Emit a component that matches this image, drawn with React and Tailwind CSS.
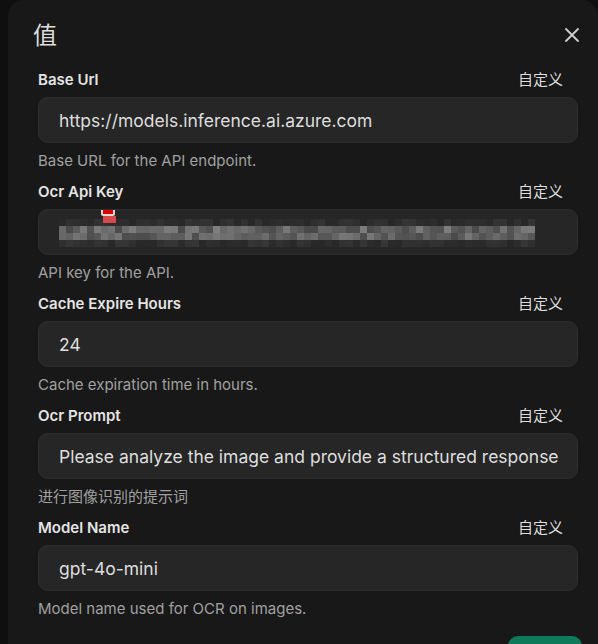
// Settings dialog: "值" panel with editable config fields.
import React from "react";

const fields = [
  { label: "Base Url", value: "https://models.inference.ai.azure.com", help: "Base URL for the API endpoint." },
  { label: "Ocr Api Key", value: null, help: "API key for the API." },
  { label: "Cache Expire Hours", value: "24", help: "Cache expiration time in hours." },
  { label: "Ocr Prompt", value: "Please analyze the image and provide a structured response", help: "进行图像识别的提示词" },
  { label: "Model Name", value: "gpt-4o-mini", help: "Model name used for OCR on images." },
];

// deterministic mosaic for the redacted key
const rand = (i) => {
  const x = Math.sin(i * 12.9898 + 78.233) * 43758.5453;
  return x - Math.floor(x);
};
const COLS = 68;
const rowRange = [
  [38, 52],
  [72, 126],
  [74, 120],
  [38, 54],
];

const Mosaic = () => (
  <div className="flex flex-col">
    {rowRange.map(([lo, hi], r) => (
      <div key={r} className="flex">
        {Array.from({ length: COLS }).map((_, c) => {
          const v = Math.round(lo + rand(r * 100 + c) * (hi - lo));
          return <div key={c} className="w-[7px] h-[7px]" style={{ background: `rgb(${v},${v},${v})` }} />;
        })}
      </div>
    ))}
  </div>
);

const Field = ({ label, value, help, masked }) => (
  <div className="flex flex-col">
    <div className="flex items-center justify-between h-5 text-[15px] leading-5">
      <span className="font-semibold text-[#e4e4e4]">{label}</span>
      <span className="text-[#dcdcdc] mr-[15px]">自定义</span>
    </div>
    <div className="relative mt-[7px] h-[46px] rounded-[10px] bg-[#262626] border border-[#2f2f2f] flex items-center px-[20px] overflow-hidden">
      {masked ? (
        <div className="pt-[2px]">
          <Mosaic />
        </div>
      ) : (
        <span className="pt-[2px] text-[17.5px] text-[#dedede] whitespace-nowrap">{value}</span>
      )}
      {masked && (
        <div className="absolute left-[62px] top-[-2px] flex flex-col">
          <div className="w-[14px] h-[8px] border-2 border-[#d8d8d8] bg-[#e00000] rounded-[2px]" />
          <div className="w-[13px] h-[7px] bg-[#d84a4a] ml-[2px]" />
        </div>
      )}
    </div>
    <p className="mt-[8px] text-[15px] leading-5 text-[#a0a0a0]">{help}</p>
  </div>
);

export default function App() {
  return (
    <div className="w-[598px] h-[644px] bg-[#0f0f0f] overflow-hidden pl-[8px]" style={{ fontFamily: "Inter, 'Noto Sans CJK SC', sans-serif" }}>
      <div className="h-full bg-[#181818] rounded-tl-[16px] rounded-tr-[16px] flex flex-col pl-[30px] pr-[20px] pt-[20px]">
        <div className="flex items-center justify-between h-[32px]">
          <h2 className="text-[24px] leading-8 text-[#dddddd] -ml-[5px]">值</h2>
          <svg width="16" height="16" viewBox="0 0 16 16" className="mr-[-2px] mt-[-2px]" fill="none" stroke="#cfcfcf" strokeWidth="1.8" strokeLinecap="round">
            <path d="M2 2 14 14M14 2 2 14" />
          </svg>
        </div>
        <div className="flex flex-col gap-[11px] mt-[18px]">
          {fields.map((f) => (
            <Field key={f.label} {...f} masked={f.value === null} />
          ))}
        </div>
        <div className="flex justify-end mt-[17px]">
          <button aria-label="保存" className="w-[74px] h-[40px] rounded-[10px] bg-[#0f7a5a] mr-[-4px]" />
        </div>
      </div>
    </div>
  );
}
